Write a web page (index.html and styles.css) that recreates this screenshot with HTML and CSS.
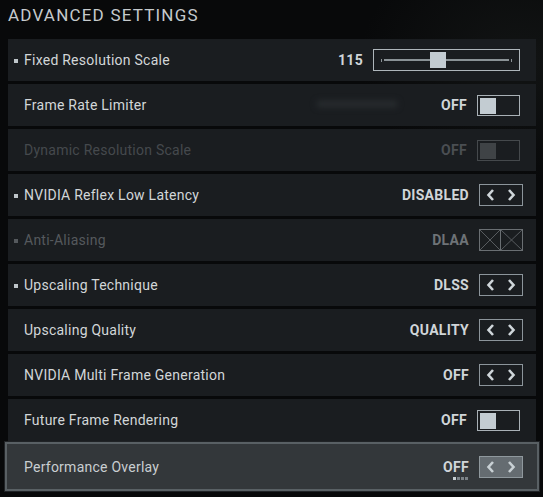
FILE: index.html
```html
<!DOCTYPE html>
<html>
<head>
<meta charset="utf-8">
<link rel="stylesheet" href="styles.css">
</head>
<body>
<div class="page">
  <h1 class="title">ADVANCED SETTINGS</h1>
  <div class="list">
    <div class="row">
      <span class="mark"></span><span class="label">Fixed Resolution Scale</span>
      <span class="value">115</span>
      <svg class="slider" width="147" height="22" viewBox="0 0 147 22">
        <rect x="0.5" y="0.5" width="146" height="21" fill="none" stroke="#aeb6bb"/>
        <rect x="8" y="10" width="1" height="3" fill="#8a9296"/>
        <rect x="11" y="10" width="125" height="2" fill="#8a9296"/>
        <rect x="138" y="10" width="1" height="3" fill="#8a9296"/>
        <rect x="57" y="3" width="16" height="16" fill="#c3ccd2"/>
      </svg>
    </div>
    <div class="row">
      <span class="mark off"></span><span class="label">Frame Rate Limiter</span>
      <span class="smudge"></span>
      <span class="value">OFF</span>
      <span class="toggle"><span class="knob"></span></span>
    </div>
    <div class="row disabled">
      <span class="mark off"></span><span class="label">Dynamic Resolution Scale</span>
      <span class="value">OFF</span>
      <span class="toggle"><span class="knob"></span></span>
    </div>
    <div class="row">
      <span class="mark"></span><span class="label">NVIDIA Reflex Low Latency</span>
      <span class="value">DISABLED</span>
      <svg class="arrows" width="44" height="22" viewBox="0 0 44 22">
        <rect x="0.5" y="0.5" width="43" height="21" fill="none" stroke="#8c959b"/>
        <path d="M14 6 L9.5 11 L14 16" fill="none" stroke="#cfd6da" stroke-width="2.6"/>
        <path d="M30 6 L34.5 11 L30 16" fill="none" stroke="#cfd6da" stroke-width="2.6"/>
      </svg>
    </div>
    <div class="row locked">
      <span class="mark"></span><span class="label">Anti-Aliasing</span>
      <span class="value">DLAA</span>
      <svg class="arrows" width="44" height="22" viewBox="0 0 44 22">
        <rect x="0.5" y="0.5" width="43" height="21" fill="none" stroke="#6a6f73"/>
        <line x1="21.5" y1="0" x2="21.5" y2="22" stroke="#6a6f73"/>
        <path d="M1 1 L21 21 M21 1 L1 21 M22 1 L43 21 M43 1 L22 21" stroke="#575b5f" stroke-width="1"/>
      </svg>
    </div>
    <div class="row">
      <span class="mark"></span><span class="label">Upscaling Technique</span>
      <span class="value">DLSS</span>
      <svg class="arrows" width="44" height="22" viewBox="0 0 44 22">
        <rect x="0.5" y="0.5" width="43" height="21" fill="none" stroke="#8c959b"/>
        <path d="M14 6 L9.5 11 L14 16" fill="none" stroke="#cfd6da" stroke-width="2.6"/>
        <path d="M30 6 L34.5 11 L30 16" fill="none" stroke="#cfd6da" stroke-width="2.6"/>
      </svg>
    </div>
    <div class="row">
      <span class="mark off"></span><span class="label">Upscaling Quality</span>
      <span class="value">QUALITY</span>
      <svg class="arrows" width="44" height="22" viewBox="0 0 44 22">
        <rect x="0.5" y="0.5" width="43" height="21" fill="none" stroke="#8c959b"/>
        <path d="M14 6 L9.5 11 L14 16" fill="none" stroke="#cfd6da" stroke-width="2.6"/>
        <path d="M30 6 L34.5 11 L30 16" fill="none" stroke="#cfd6da" stroke-width="2.6"/>
      </svg>
    </div>
    <div class="row">
      <span class="mark off"></span><span class="label">NVIDIA Multi Frame Generation</span>
      <span class="value">OFF</span>
      <svg class="arrows" width="44" height="22" viewBox="0 0 44 22">
        <rect x="0.5" y="0.5" width="43" height="21" fill="none" stroke="#8c959b"/>
        <path d="M14 6 L9.5 11 L14 16" fill="none" stroke="#cfd6da" stroke-width="2.6"/>
        <path d="M30 6 L34.5 11 L30 16" fill="none" stroke="#cfd6da" stroke-width="2.6"/>
      </svg>
    </div>
    <div class="row">
      <span class="mark off"></span><span class="label">Future Frame Rendering</span>
      <span class="value">OFF</span>
      <span class="toggle"><span class="knob"></span></span>
    </div>
    <div class="row active">
      <span class="mark off"></span><span class="label">Performance Overlay</span>
      <span class="value dotted">OFF<span class="dots"><i class="on"></i><i></i><i></i><i></i></span></span>
      <svg class="arrows" width="44" height="22" viewBox="0 0 44 22">
        <rect x="0.5" y="0.5" width="43" height="21" fill="#656c71" stroke="#8f989d"/>
        <path d="M14 6 L9.5 11 L14 16" fill="none" stroke="#c8d0d4" stroke-width="2.6"/>
        <path d="M30 6 L34.5 11 L30 16" fill="none" stroke="#c8d0d4" stroke-width="2.6"/>
      </svg>
    </div>
  </div>
</div>
</body>
</html>
```

FILE: styles.css
```css
html, body {
  margin: 0;
  padding: 0;
}
body {
  width: 543px;
  height: 497px;
  overflow: hidden;
  background: radial-gradient(ellipse 160px 120px at 520px 60px, #121414 0%, rgba(10,11,12,0) 100%), #08090a;
  font-family: Roboto, "Liberation Sans", sans-serif;
  color: #cfd4d7;
}
.page {
  padding: 0 7px 0 8px;
}
.title {
  margin: 0;
  height: 39px;
  padding-top: 3px;
  box-sizing: border-box;
  font-size: 17px;
  font-weight: 400;
  letter-spacing: 1.2px;
  color: #c5cacd;
  line-height: 24px;
}
.list {
  display: flex;
  flex-direction: column;
  gap: 3px;
}
.row {
  position: relative;
  height: 42px;
  box-sizing: border-box;
  display: flex;
  align-items: center;
  background: #1a1d20;
  padding: 0 13px 0 6px;
}
.mark {
  width: 4px;
  height: 4px;
  background: #bfc6ca;
  margin: 2px 6px 0 0;
  flex: none;
}
.mark.off {
  visibility: hidden;
}
.label {
  flex: 1;
  font-size: 14px;
  color: #d2d6d8;
  letter-spacing: 0.25px;
}
.value {
  position: relative;
  font-size: 14px;
  font-weight: 700;
  letter-spacing: 0.3px;
  color: #d0d5d8;
  margin-right: 10px;
}
.slider, .arrows {
  display: block;
  flex: none;
}
.slider {
  margin-right: 3px;
}
.toggle {
  width: 43px;
  height: 21px;
  box-sizing: border-box;
  border: 1px solid #a9b1b6;
  padding: 2px;
  margin-right: 3px;
  display: flex;
}
.knob {
  width: 16px;
  height: 16px;
  background: #c3ccd2;
}
.smudge {
  width: 80px;
  height: 6px;
  background: #2a2e31;
  filter: blur(3px);
  margin-right: 44px;
  margin-top: -2px;
}
.disabled .label { color: #45494d; }
.disabled .value { color: #4a4e52; }
.disabled .toggle { border-color: #45494c; }
.disabled .knob { background: #3f4346; }
.locked .label { color: #55595d; }
.locked .mark { background: #55595d; }
.locked .value { color: #6e7377; }
.active {
  height: 49px;
  margin: -2px -3px 0 -3px;
  border: 2px solid #596064;
  outline: 1px solid #202326;
  background: #33373a;
  padding: 0 14px 0 7px;
}
.active .label { color: #c9ced1; }
.dots {
  position: absolute;
  right: 1px;
  top: 18px;
  display: flex;
  gap: 1px;
}
.dots i {
  width: 3px;
  height: 3px;
  background: #7c8388;
}
.dots i.on {
  background: #c8d0d4;
}
```
